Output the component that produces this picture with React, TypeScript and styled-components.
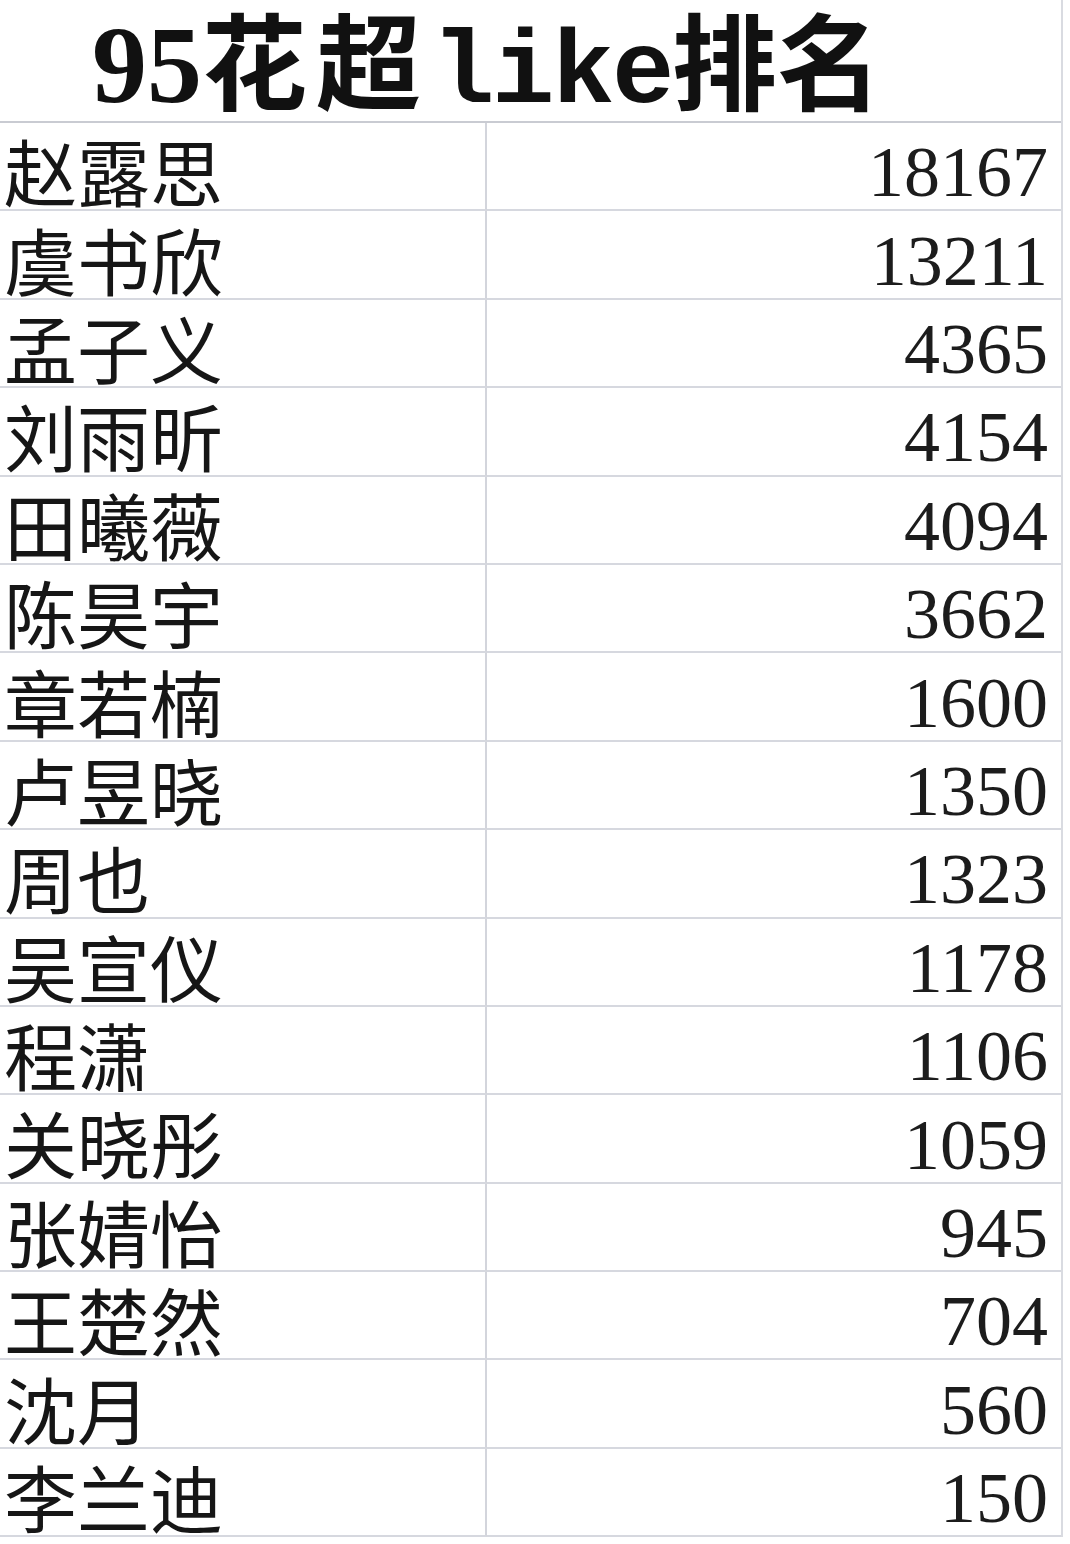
import React from 'react';
import styled, { createGlobalStyle } from 'styled-components';

const rows: [string, string][] = [
  ['赵露思', '18167'],
  ['虞书欣', '13211'],
  ['孟子义', '4365'],
  ['刘雨昕', '4154'],
  ['田曦薇', '4094'],
  ['陈昊宇', '3662'],
  ['章若楠', '1600'],
  ['卢昱晓', '1350'],
  ['周也', '1323'],
  ['吴宣仪', '1178'],
  ['程潇', '1106'],
  ['关晓彤', '1059'],
  ['张婧怡', '945'],
  ['王楚然', '704'],
  ['沈月', '560'],
  ['李兰迪', '150'],
];

const App = () => {
  return (
    <>
      <GlobalStyle />
      <Page>
        <Sheet>
          <TitleCell>
            <TitleDigits>95</TitleDigits>
            <TitleCjk $gap={9}>花超</TitleCjk>
            <TitleLatin>like</TitleLatin>
            <TitleCjk $gap={0}>排名</TitleCjk>
          </TitleCell>
          {rows.map(([name, count]) => (
            <React.Fragment key={name}>
              <NameCell>{name}</NameCell>
              <NumberCell>{count}</NumberCell>
            </React.Fragment>
          ))}
        </Sheet>
      </Page>
    </>
  );
};

export default App;

const GlobalStyle = createGlobalStyle`
  html, body {
    margin: 0;
    padding: 0;
    background: #ffffff;
  }
  body {
    font-family: "Noto Sans CJK SC", "Liberation Sans", sans-serif;
    color: #141414;
  }
`;

const Page = styled.div`
  width: 1070px;
  height: 1544px;
  overflow: hidden;
  background: #ffffff;
`;

const Sheet = styled.div`
  width: 1063px;
  display: grid;
  grid-template-columns: 487px 574px;
  grid-template-rows: 123px;
  grid-auto-rows: 88.4px;
  border-right: 2px solid #d9dbe1;
  box-sizing: border-box;
`;

const TitleCell = styled.div`
  grid-column: 1 / span 2;
  display: flex;
  align-items: baseline;
  padding-left: 92px;
  padding-top: 10px;
  border-bottom: 2px solid #c9cbd2;
  box-sizing: border-box;
  color: #111111;
  line-height: 92px;
  height: 123px;
`;

const TitleDigits = styled.span`
  font-family: "Liberation Serif", serif;
  font-weight: 700;
  font-size: 110px;
`;

const TitleLatin = styled.span`
  font-family: "Liberation Mono", monospace;
  font-weight: 700;
  font-size: 104px;
  letter-spacing: -2.4px;
  margin-left: 2px;
`;

const TitleCjk = styled.span<{ $gap: number }>`
  font-family: "Noto Sans CJK SC", sans-serif;
  font-weight: 700;
  font-size: 105px;
  letter-spacing: ${(p) => p.$gap}px;
`;

const Cell = styled.div`
  display: flex;
  align-items: center;
  border-bottom: 2px solid #d6d8df;
  box-sizing: border-box;
`;

const NameCell = styled(Cell)`
  padding-left: 4px;
  padding-top: 6px;
  border-right: 2px solid #d3d5dc;
  font-family: "Noto Sans CJK SC", sans-serif;
  font-size: 73px;
  line-height: 80px;
  color: #161616;
`;

const NumberCell = styled(Cell)`
  justify-content: flex-end;
  padding-right: 13px;
  padding-top: 12px;
  font-family: "Liberation Serif", serif;
  font-size: 72px;
  line-height: 80px;
  color: #1c1c1c;
`;
